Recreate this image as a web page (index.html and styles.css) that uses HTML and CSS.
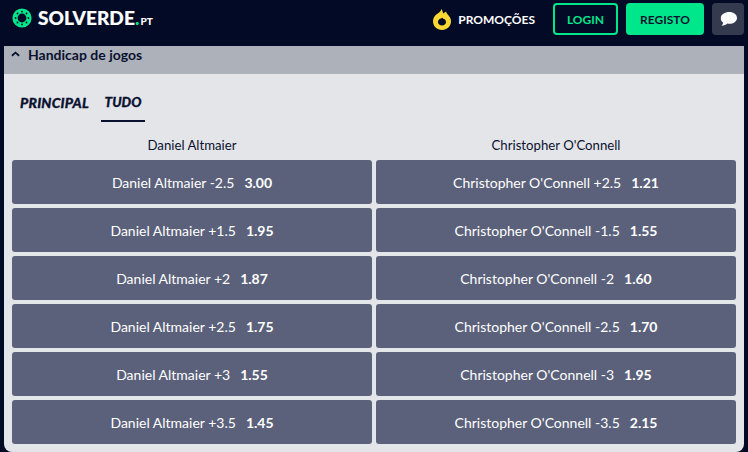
FILE: index.html
```html
<!DOCTYPE html>
<html lang="pt">
<head>
<meta charset="utf-8">
<title>Solverde.pt</title>
<link rel="stylesheet" href="styles.css">
</head>
<body>
<header class="topbar">
  <a class="brand">
    <svg class="brand-mark" viewBox="0 0 20 20" width="20" height="20" aria-hidden="true">
      <circle cx="10" cy="10" r="7" fill="none" stroke="#00e68a" stroke-width="5.2"/>
      <g fill="#020a26">
        <circle cx="10" cy="3.600" r=".9"/><circle cx="10" cy="16.400" r=".9"/><circle cx="3.600" cy="10" r=".9"/><circle cx="16.400" cy="10" r=".9"/>
        <circle cx="5.500" cy="5.500" r=".9"/><circle cx="14.500" cy="5.500" r=".9"/><circle cx="5.500" cy="14.500" r=".9"/><circle cx="14.500" cy="14.500" r=".9"/>
      </g>
    </svg>
    <span class="brand-name">SOLVERDE</span><span class="brand-dot">.</span><span class="brand-tld">PT</span>
  </a>
  <nav class="actions">
    <a class="promo">
      <svg class="promo-icon" viewBox="0 0 18 21" width="18" height="21" aria-hidden="true">
        <path fill="#fdd835" d="M8.500 0c1 1.900 1.300 3.300 1.800 4.600L13 2.500c.5 1.700 1.600 2.800 2.800 4.300 1.300 1.600 2.200 3.400 2.200 5.500C18 17.200 14 21 9 21S0 17.200 0 12.300C0 9.600 1.200 7.600 2.700 6.100 4.900 4 7.700 3 8.500 0z"/>
        <path fill="#020a26" d="M9.800 8.800c.2 1 .9 1.500 1.600 1.100.9.800 1.600 1.800 1.600 3 0 2.100-1.800 3.600-4 3.600s-4-1.500-4-3.500c0-1.500 1-2.500 2.100-3.200 1-.3 2-.6 2.700-1z"/>
      </svg>
      <span>PROMOÇÕES</span>
    </a>
    <a class="btn btn-login">LOGIN</a>
    <a class="btn btn-register">REGISTO</a>
    <a class="btn-chat">
      <svg viewBox="0 0 17 14" width="17" height="14" aria-hidden="true">
        <path fill="#fff" d="M9.200 0C13.500 0 17 2.600 17 5.900s-3.500 5.900-7.800 5.900c-.7 0-1.400-.1-2-.2C6 12.900 4 13.800 1.500 13.800c.9-.9 1.500-2 1.600-3.200C1.500 9.500.8 7.800.8 5.900.8 2.600 4.900 0 9.200 0z"/>
      </svg>
    </a>
  </nav>
</header>
<main class="market">
  <div class="market-head">
    <svg class="chevron" viewBox="0 0 10 6" width="9" height="6" aria-hidden="true"><path d="M1 5l4-3.500L9 5" fill="none" stroke="#0a1230" stroke-width="2"/></svg>
    <span>Handicap de jogos</span>
  </div>
  <div class="tabs">
    <a class="tab">PRINCIPAL</a>
    <a class="tab tab-active">TUDO</a>
  </div>
  <div class="columns">
    <div class="col-title">Daniel Altmaier</div>
    <div class="col-title">Christopher O'Connell</div>
    <a class="odd"><span>Daniel Altmaier -2.5</span><b>3.00</b></a>
    <a class="odd"><span>Christopher O'Connell +2.5</span><b>1.21</b></a>
    <a class="odd"><span>Daniel Altmaier +1.5</span><b>1.95</b></a>
    <a class="odd"><span>Christopher O'Connell -1.5</span><b>1.55</b></a>
    <a class="odd"><span>Daniel Altmaier +2</span><b>1.87</b></a>
    <a class="odd"><span>Christopher O'Connell -2</span><b>1.60</b></a>
    <a class="odd"><span>Daniel Altmaier +2.5</span><b>1.75</b></a>
    <a class="odd"><span>Christopher O'Connell -2.5</span><b>1.70</b></a>
    <a class="odd"><span>Daniel Altmaier +3</span><b>1.55</b></a>
    <a class="odd"><span>Christopher O'Connell -3</span><b>1.95</b></a>
    <a class="odd"><span>Daniel Altmaier +3.5</span><b>1.45</b></a>
    <a class="odd"><span>Christopher O'Connell -3.5</span><b>2.15</b></a>
  </div>
</main>
</body>
</html>
```
FILE: styles.css
```css
* { box-sizing: border-box; }
html, body { margin: 0; height: 100%; }
body {
  width: 748px;
  height: 452px;
  overflow: hidden;
  background: #020a26;
  font-family: "Lato", "Liberation Sans", sans-serif;
  color: #0a1230;
}
.topbar {
  height: 46px;
  display: flex;
  align-items: center;
  justify-content: space-between;
  padding: 0 4px 8px 12px;
}
.brand { display: flex; align-items: baseline; color: #fff; margin-bottom: 3px; }
.brand-mark { align-self: center; margin-right: 6px; }
.brand-name { font-size: 19px; font-weight: 900; letter-spacing: .1px; -webkit-text-stroke: .2px #fff; }
.brand-dot { font-size: 19px; font-weight: 900; color: #00e68a; }
.brand-tld { font-size: 10px; font-weight: 900; margin-left: 1px; }
.actions { display: flex; align-items: center; }
.promo { display: flex; align-items: center; color: #fff; font-size: 12px; font-weight: 700; margin-right: 18px; }
.promo-icon { margin-right: 7px; }
.btn {
  height: 32px;
  display: flex;
  align-items: center;
  justify-content: center;
  border-radius: 4px;
  font-size: 12px;
  font-weight: 700;
}
.btn-login { width: 65px; border: 2px solid #00e68a; color: #00e68a; margin-right: 8px; }
.btn-register { width: 78px; background: #00e68a; color: #0a1230; margin-right: 8px; }
.btn-chat {
  width: 32px;
  height: 32px;
  border-radius: 4px;
  background: #353b4f;
  display: flex;
  align-items: center;
  justify-content: center;
}
.market {
  margin: 0 4px;
  height: 406px;
  background: #e4e5e9;
  border-radius: 0 0 8px 8px;
  overflow: hidden;
}
.market-head {
  height: 28px;
  background: #adb1ba;
  display: flex;
  align-items: center;
  padding: 0 0 12px 7px;
  font-size: 14px;
  font-weight: 700;
}
.chevron { margin-right: 8px; }
.tabs { display: flex; height: 48px; padding-left: 8px; }
.tab {
  padding: 20px 8px 0;
  font-size: 14px;
  font-weight: 900;
  font-style: italic;
  letter-spacing: .2px;
  color: #0a1230;
  -webkit-text-stroke: .3px #0a1230;
  margin-right: 4px;
}
.tab-active {
  width: 44px;
  padding: 20px 0 0;
  text-align: center;
  font-size: 13.500px;
  letter-spacing: 0;
  border-bottom: 2px solid #0a1230;
}
.columns {
  display: grid;
  grid-template-columns: 360px 360px;
  grid-template-rows: 34px;
  grid-auto-rows: 44px;
  gap: 4px;
  padding: 0 8px;
}
.col-title {
  height: 38px;
  margin-bottom: -4px;
  padding-top: 14px;
  text-align: center;
  font-size: 13.200px;
  color: #0a1230;
  line-height: 18px;
}
.odd {
  background: #5b617a;
  border-radius: 3px;
  color: #fff;
  display: flex;
  align-items: center;
  justify-content: center;
  font-size: 14px;
}
.odd b { margin-left: 10px; font-weight: 700; }
```
